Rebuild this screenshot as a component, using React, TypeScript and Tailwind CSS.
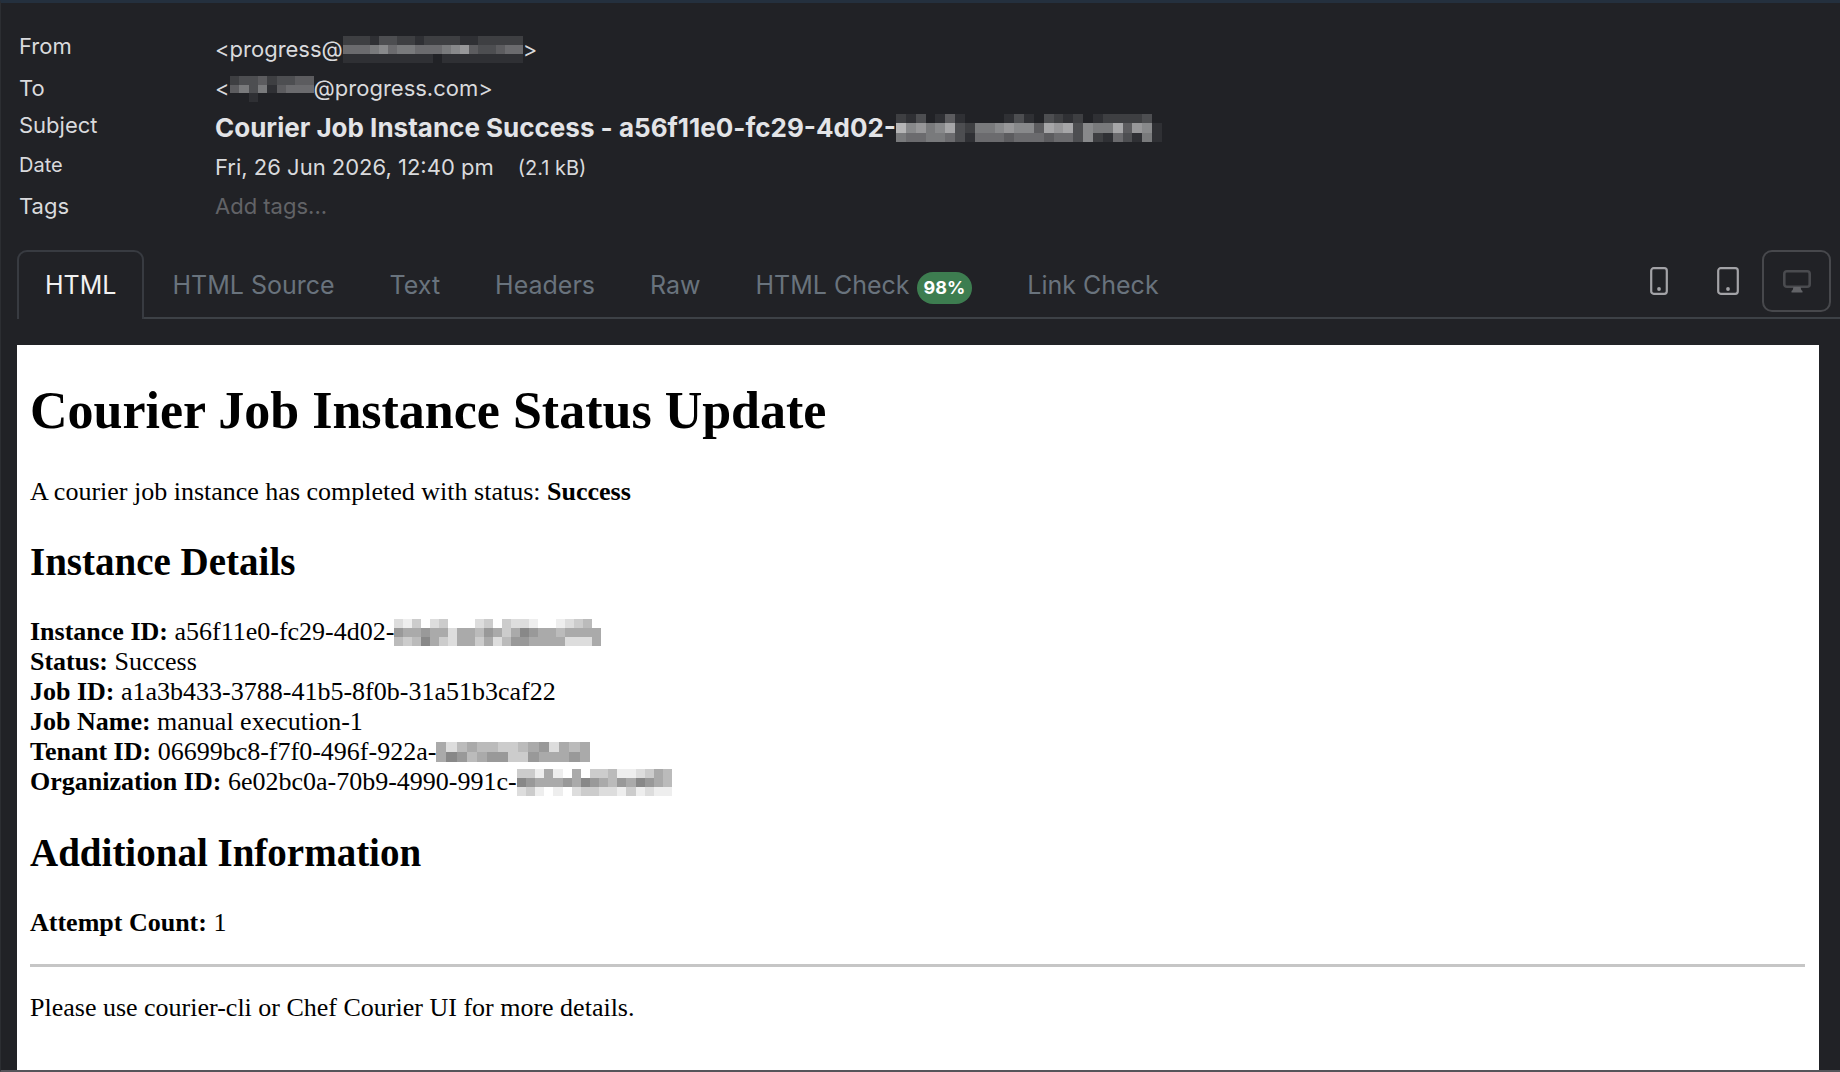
import { useState } from 'react'

type MosaicProps = {
  rows: string[]
  width: number
  height: number
  dark?: boolean
}

// Masked part of an address or id. Every hex digit is the strength of one block.
function Mosaic({ rows, width, height, dark }: MosaicProps) {
  const cols = rows[0].length
  return (
    <svg
      width={width}
      height={height}
      viewBox={`0 0 ${cols} ${rows.length}`}
      preserveAspectRatio="none"
      shapeRendering="crispEdges"
      className={dark ? 'shrink-0 text-black' : 'shrink-0 text-white'}
      aria-label="redacted"
    >
      {rows.map((row, y) =>
        row.split('').map((c, x) => (
          <rect
            key={`${x}-${y}`}
            x={x}
            y={y}
            width="1"
            height="1"
            fill="currentColor"
            opacity={parseInt(c, 16) / 15}
          />
        ))
      )}
    </svg>
  )
}

const masks = {
  from: ['22213322122221122222', '55567566555678433455', '11111111110111111111'],
  to: ['233423344', '463614555', '001000000'],
  subject: [
    '213014100001310321201222230',
    'a78679326678774989376694871',
    '655665315554555455372153161',
  ],
  instance: ['21302300023032210012340', '65565525546535765545555', '43475325535246655552225'],
  tenant: ['524544334562545', '576456633655565'],
  organization: ['33151050334112354', '76555657654657654', '23101023322131211'],
}

const tabs = ['HTML', 'HTML Source', 'Text', 'Headers', 'Raw', 'HTML Check', 'Link Check']

function PhoneIcon() {
  return (
    <svg width="18" height="28" viewBox="0 0 18 28" fill="none" className="text-[#a3a3a7]">
      <rect x="1.2" y="1.2" width="15.6" height="25.6" rx="2.5" stroke="currentColor" strokeWidth="2.2" />
      <circle cx="9" cy="22" r="1.9" fill="currentColor" />
    </svg>
  )
}

function TabletIcon() {
  return (
    <svg width="22" height="28" viewBox="0 0 22 28" fill="none" className="text-[#a3a3a7]">
      <rect x="1.2" y="1.2" width="19.6" height="25.6" rx="2.5" stroke="currentColor" strokeWidth="2.2" />
      <circle cx="11" cy="22" r="1.9" fill="currentColor" />
    </svg>
  )
}

function DisplayIcon() {
  return (
    <svg width="28" height="23" viewBox="0 0 28 23" fill="none" className="text-[#4a4b4f]">
      <rect x="1.3" y="1.3" width="25.4" height="15.4" rx="2.5" stroke="currentColor" strokeWidth="2.6" />
      <path d="M10.5 17h7l.8 3 1.2 1v1.5h-11V21l1.2-1z" fill="#626367" />
    </svg>
  )
}

function MessageHeaders() {
  return (
    <div className="pl-[18px] pt-[27px] text-[22px] text-[#d9dadd]">
      <div className="flex h-[39px] items-center">
        <div className="w-[196px] shrink-0 self-start leading-8">From</div>
        <div className="flex items-center">
          <span>&lt;progress@</span>
          <Mosaic rows={masks.from} width={180} height={27} />
          <span>&gt;</span>
        </div>
      </div>
      <div className="flex h-[39px] items-center">
        <div className="w-[196px] shrink-0">To</div>
        <div className="flex items-center">
          <span>&lt;</span>
          <Mosaic rows={masks.to} width={84} height={26} />
          <span>@progress.com&gt;</span>
        </div>
      </div>
      <div className="flex h-[39px] items-center">
        <div className="w-[196px] shrink-0 self-start leading-[34px]">Subject</div>
        <div className="flex items-center text-[26px] font-bold text-[#e3e4e7]">
          <span>Courier Job Instance Success - a56f11e0-fc29-4d02-</span>
          <Mosaic rows={masks.subject} width={266} height={28} />
        </div>
      </div>
      <div className="flex h-10 items-center">
        <div className="w-[196px] shrink-0 self-start text-[20px] leading-9">Date</div>
        <div className="flex items-baseline gap-6">
          <span>Fri, 26 Jun 2026, 12:40 pm</span>
          <small className="text-[20px]">(2.1 kB)</small>
        </div>
      </div>
      <div className="flex h-[39px] items-center">
        <label htmlFor="tags" className="w-[196px] shrink-0">
          Tags
        </label>
        <input
          id="tags"
          type="text"
          placeholder="Add tags..."
          className="min-w-0 flex-1 bg-transparent outline-none placeholder:text-[#626367]"
        />
      </div>
    </div>
  )
}

function MessageBody() {
  return (
    <div className="ml-4 mr-[21px] mt-[26px] flex-1 bg-white pb-10 pl-[13px] pr-[14px] pt-9 font-['Liberation_Serif',serif] text-[26px] leading-[30px] text-black">
      <h1 className="text-[52px] font-bold leading-[60px]">Courier Job Instance Status Update</h1>
      <p className="mt-9">
        A courier job instance has completed with status: <strong>Success</strong>
      </p>

      <h2 className="mt-8 text-[39px] font-bold leading-[45px]">Instance Details</h2>
      <div className="mt-[33px]">
        <div className="flex items-center">
          <span>
            <strong>Instance ID:</strong> a56f11e0-fc29-4d02-
          </span>
          <Mosaic rows={masks.instance} width={207} height={27} dark />
        </div>
        <div>
          <strong>Status:</strong> Success
        </div>
        <div>
          <strong>Job ID:</strong> a1a3b433-3788-41b5-8f0b-31a51b3caf22
        </div>
        <div>
          <strong>Job Name:</strong> manual execution-1
        </div>
        <div className="flex items-center">
          <span>
            <strong>Tenant ID:</strong> 06699bc8-f7f0-496f-922a-
          </span>
          <Mosaic rows={masks.tenant} width={154} height={20} dark />
        </div>
        <div className="flex items-center">
          <span>
            <strong>Organization ID:</strong> 6e02bc0a-70b9-4990-991c-
          </span>
          <Mosaic rows={masks.organization} width={155} height={27} dark />
        </div>
      </div>

      <h2 className="mt-[33px] text-[39px] font-bold leading-[45px]">Additional Information</h2>
      <p className="mt-[33px]">
        <strong>Attempt Count:</strong> 1
      </p>
      <hr className="my-[26px] border-0 border-t-[3px] border-[#c6c6c6]" />
      <p>Please use courier-cli or Chef Courier UI for more details.</p>
    </div>
  )
}

export default function App() {
  const [tab, setTab] = useState('HTML')

  return (
    <div className="flex min-h-screen flex-col border-b-2 border-l border-t-[3px] border-b-[#55545a] border-l-[#2c2e32] border-t-[#24303e] bg-[#212226] font-['Inter',sans-serif]">
      <MessageHeaders />

      <div className="ml-4 mt-6 flex items-start justify-between border-b-2 border-[#3d4146]">
        <div role="tablist" className="-mb-[2px] flex text-[25px] leading-[67px]">
          {tabs.map((name) => (
            <button
              key={name}
              role="tab"
              aria-selected={tab === name}
              onClick={() => setTab(name)}
              className={
                tab === name
                  ? 'rounded-t-[10px] border-2 border-b-0 border-[#383b41] bg-[#212226] px-[26px] text-[#f1f1f2]'
                  : 'border-2 border-b-0 border-transparent pl-[26px] pr-[25px] text-[#69737d]'
              }
            >
              {name}
              {name === 'HTML Check' && (
                <span className="ml-[7px] inline-block rounded-full bg-[#3d7d50] px-[7px] text-[18px] font-bold leading-8 text-white">
                  98%
                </span>
              )}
            </button>
          ))}
        </div>
        <div className="mr-[9px] flex">
          <button aria-label="Phone preview" className="flex h-[62px] w-[69px] items-center justify-center">
            <PhoneIcon />
          </button>
          <button aria-label="Tablet preview" className="flex h-[62px] w-[69px] items-center justify-center">
            <TabletIcon />
          </button>
          <button
            aria-label="Desktop preview"
            className="flex h-[62px] w-[69px] items-center justify-center rounded-[10px] border-2 border-[#47484c]"
          >
            <DisplayIcon />
          </button>
        </div>
      </div>

      <MessageBody />
    </div>
  )
}
